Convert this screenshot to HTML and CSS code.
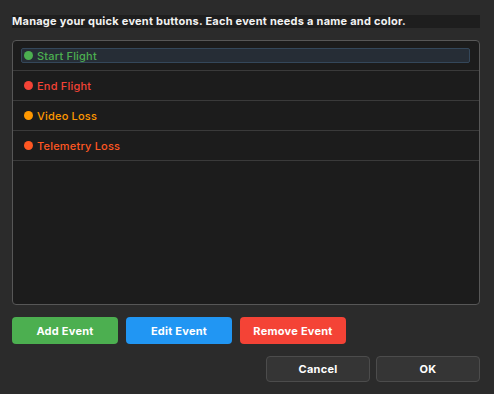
FILE: index.html
```html
<!DOCTYPE html>
<html lang="en">
<head>
    <meta charset="UTF-8">
    <meta name="viewport" content="width=device-width, initial-scale=1.0">
    <title>Quick Events</title>
    <link rel="stylesheet" href="styles.css">
</head>
<body>
    <div class="dialog">
        <div class="intro">Manage your quick event buttons. Each event needs a name and color.</div>

        <ul class="event-list">
            <li class="event-row"><span class="event selected green"><span class="dot"></span>Start Flight</span></li>
            <li class="event-row"><span class="event red"><span class="dot"></span>End Flight</span></li>
            <li class="event-row"><span class="event orange"><span class="dot"></span>Video Loss</span></li>
            <li class="event-row"><span class="event deep-orange"><span class="dot"></span>Telemetry Loss</span></li>
        </ul>

        <div class="actions">
            <button class="btn add">Add Event</button>
            <button class="btn edit">Edit Event</button>
            <button class="btn remove">Remove Event</button>
        </div>

        <div class="footer">
            <button class="btn plain">Cancel</button>
            <button class="btn plain">OK</button>
        </div>
    </div>
</body>
</html>
```

FILE: styles.css
```css
body {
    margin: 0;
    padding: 0;
    background-color: #2b2b2b;
    font-family: Inter, "Noto Sans", sans-serif;
    color: #fff;
}
.dialog {
    width: 494px;
    height: 394px;
    padding: 15px 14px 0 12px;
    box-sizing: border-box;
    display: flex;
    flex-direction: column;
}
.intro {
    background-color: #1e1e1e;
    font-size: 11px;
    font-weight: 700;
    line-height: 13px;
    height: 13px;
    letter-spacing: 0.25px;
    color: #f2f2f2;
}
.event-list {
    list-style: none;
    margin: 12px 0 0 0;
    padding: 0;
    height: 265px;
    box-sizing: border-box;
    background-color: #1c1c1c;
    border: 1px solid #575757;
    border-radius: 4px;
}
.event-row {
    height: 30px;
    box-sizing: border-box;
    border-bottom: 1px solid #3a3a3a;
    padding: 8px 9px 0 8px;
}
.event {
    display: flex;
    align-items: center;
    gap: 4px;
    height: 13px;
    padding-left: 2px;
    font-size: 11px;
    font-weight: 500;
    letter-spacing: 0.2px;
    border: 1px solid transparent;
    margin-top: -1px;
}
.event.selected {
    background-color: #262d36;
    border-color: #34475a;
    border-radius: 2px;
}
.dot {
    width: 9px;
    height: 9px;
    border-radius: 50%;
    background-color: currentColor;
}
.green { color: #4caf50; }
.red { color: #f44336; }
.orange { color: #ff9800; }
.deep-orange { color: #ff5722; }
.actions {
    display: flex;
    gap: 8px;
    margin-top: 12px;
}
.btn {
    font-family: inherit;
    font-size: 11px;
    font-weight: 700;
    letter-spacing: 0.25px;
    color: #fff;
    border: none;
    border-radius: 4px;
    width: 106px;
    height: 27px;
    padding: 0;
    cursor: pointer;
}
.add { background-color: #4caf50; }
.edit { background-color: #2196f3; }
.remove { background-color: #f44336; }
.footer {
    display: flex;
    justify-content: flex-end;
    gap: 6px;
    margin-top: 12px;
}
.btn.plain {
    width: 104px;
    height: 26px;
    background-color: #353535;
    border: 1px solid #4c4c4c;
}
```
